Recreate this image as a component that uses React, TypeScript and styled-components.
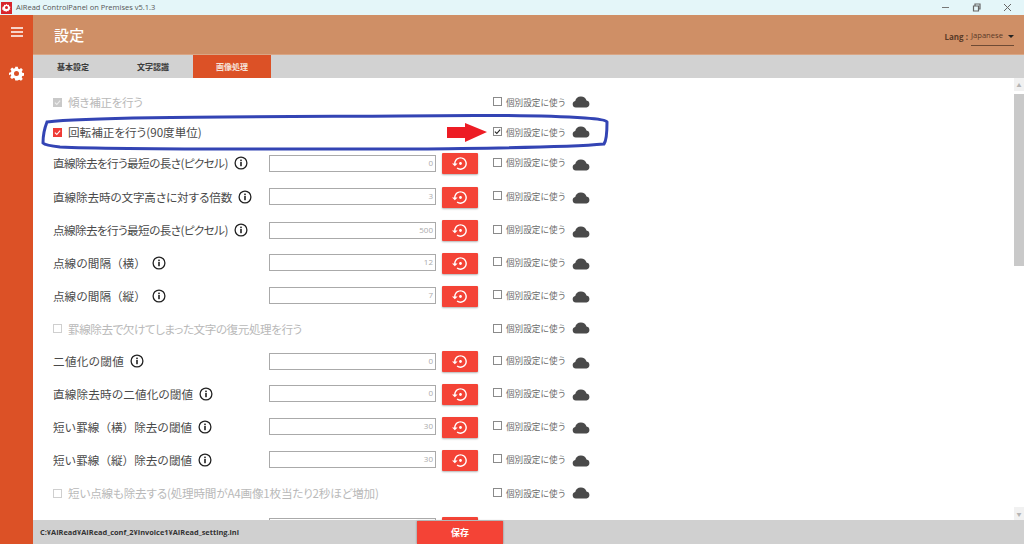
import React from "react";
import styled, { createGlobalStyle, css } from "styled-components";

const Global = createGlobalStyle`
  html, body { margin: 0; padding: 0; width: 1024px; height: 544px; overflow: hidden; background: #fff; }
  body { font-family: "Noto Sans CJK JP", "Noto Sans", sans-serif; }
`;

const labelText = css<{ $track?: number; $plain?: boolean }>`
  font-size:11.6px;
  font-feature-settings:${p => (p.$plain ? "normal" : '"palt"')};
  letter-spacing:${p => p.$track ?? 0}px;
  white-space:nowrap;
`;

const Win = styled.div`width:1024px;height:544px;display:flex;flex-direction:column;position:relative;overflow:hidden;`;
const TitleBar = styled.div`height:15px;flex:none;background:#e4f6f9;display:flex;align-items:center;padding:0 12px 0 1px;gap:4px;color:#555;font:7.5px/15px "Open Sans","Noto Sans",sans-serif;`;
const AppLogo = styled.div`width:11px;height:12px;background:#d8252b;display:flex;align-items:center;justify-content:center;`;
const TitleText = styled.span`flex:1;`;
const WinButtons = styled.div`display:flex;align-items:center;gap:22px;`;
const Body = styled.div`flex:1;display:flex;min-height:0;`;
const Sidebar = styled.div`width:33px;flex:none;background:#dc5126;display:flex;flex-direction:column;align-items:center;color:#fff;padding-top:11px;gap:28px;`;
const Main = styled.div`flex:1;display:flex;flex-direction:column;min-width:0;`;
const Header = styled.div`height:40px;flex:none;background:#cf8f66;display:flex;align-items:center;justify-content:space-between;padding:0 10px 0 21px;border-bottom:1px solid #d9a685;box-sizing:border-box;`;
const Title = styled.div`color:#fff;font-size:15px;font-weight:500;line-height:40px;letter-spacing:.3px;`;
const Lang = styled.div`display:flex;align-items:flex-start;gap:3px;color:#5b3a26;font:700 8px/12px "Open Sans",sans-serif;padding-top:5px;`;
const LangLabel = styled.span`margin-top:3px;`;
const LangSelect = styled.div`width:43px;height:17px;border-bottom:1px solid #6e4a34;display:flex;justify-content:space-between;font-weight:400;font-size:7.6px;line-height:12px;box-sizing:border-box;margin-top:1px;`;
const Caret = styled.i`width:0;height:0;border:3px solid transparent;border-top:3px solid #222;border-bottom:0;margin:6px 0 0;`;
const Tabs = styled.div`height:23px;flex:none;background:#d2d2d2;display:flex;`;
const Tab = styled.div<{ $active?: boolean; $w: number }>`
  width:${p => p.$w}px;text-align:center;font-size:8px;line-height:23px;font-weight:700;
  background:${p => (p.$active ? "#dc5126" : "transparent")};
  color:${p => (p.$active ? "#f6e3da" : "#3a3a3a")};
`;
const Content = styled.div`flex:1;min-height:0;display:flex;position:relative;overflow:hidden;`;
const List = styled.div`flex:1;padding:9px 0 0 20px;min-width:0;`;
const Row = styled.div<{ $h: number }>`height:${p => p.$h}px;display:flex;align-items:center;`;
const Left = styled.div`width:216px;flex:none;display:flex;align-items:center;color:#4a4a4a;gap:6px;`;
const LabelText = styled.span<{ $track?: number; $plain?: boolean }>`${labelText}`;
const CheckLeft = styled.div<{ $off?: boolean }>`width:440px;flex:none;display:flex;align-items:center;gap:6px;color:${p => (p.$off ? "#b9b9b9" : "#4a4a4a")};`;
const SmallBox = styled.span<{ $kind: "grey" | "red" | "empty" }>`
  width:9px;height:9px;box-sizing:border-box;display:flex;align-items:center;justify-content:center;flex:none;
  background:${p => (p.$kind === "grey" ? "#c9c9c9" : p.$kind === "red" ? "#ef3b36" : "#fff")};
  border:${p => (p.$kind === "empty" ? "1px solid #cfcfcf" : "none")};
`;
const Input = styled.div`width:167px;height:17px;box-sizing:border-box;border:1px solid #aaa;flex:none;text-align:right;font:8px/13px "Open Sans",sans-serif;color:#aaa;padding-right:2px;background:#fff;`;
const ResetBtn = styled.div`width:36px;height:21px;margin:1px 15px 0 6px;flex:none;background:#f44336;border-radius:1px;box-shadow:0 1px 2px rgba(0,0,0,.3);display:flex;align-items:center;justify-content:center;`;
const Own = styled.div`display:flex;align-items:center;font-size:8.6px;color:#6a6a6a;white-space:nowrap;width:130px;`;
const OwnLabel = styled.span<{ $raised: boolean }>`display:flex;align-items:center;margin-bottom:${p => (p.$raised ? 2 : 1)}px;`;
const OwnBox = styled.span`width:9px;height:9px;box-sizing:border-box;border:1px solid #8a8a8a;background:#fff;margin-right:4px;flex:none;display:flex;align-items:center;justify-content:center;`;
const Cloud = styled.svg<{ $raised: boolean }>`width:18px;height:13px;margin-left:6px;margin-top:${p => (p.$raised ? 2 : 0)}px;margin-bottom:${p => (p.$raised ? 0 : 2)}px;flex:none;`;
const Scrollbar = styled.div`width:10px;flex:none;background:#fff;display:flex;flex-direction:column;justify-content:space-between;`;
const ScrollThumb = styled.div`position:absolute;right:0;top:16px;width:10px;height:172px;background:#c9c9c9;`;
const ArrowCell = styled.span`height:13px;background:#f1f1f1;color:#b5b5b5;font-size:5px;line-height:13px;text-align:center;`;
const Footer = styled.div`height:24px;flex:none;background:#d0d0d0;position:relative;display:flex;align-items:center;padding-left:7px;font:700 7.4px/24px "Open Sans",sans-serif;color:#333;`;
const SaveBtn = styled.div`position:absolute;left:384px;bottom:0;width:86px;height:23px;background:#f44336;color:#fff;font:700 9px/23px "Noto Sans CJK JP",sans-serif;text-align:center;box-shadow:0 0 2px rgba(0,0,0,.4);`;
const Overlay = styled.svg`position:absolute;left:0;top:0;width:1024px;height:544px;pointer-events:none;`;

const Info = () => (
  <svg width="14" height="14" viewBox="0 0 14 14" style={{ flex: "none" }}>
    <circle cx="7" cy="7" r="5.9" fill="none" stroke="#222" strokeWidth="1.3" />
    <rect x="6.2" y="6" width="1.6" height="4.2" fill="#222" />
    <rect x="6.2" y="3.6" width="1.6" height="1.6" fill="#222" />
  </svg>
);
const Tick = ({ c }: { c: string }) => (
  <svg width="7" height="7" viewBox="0 0 8 8"><path d="M1 4.2 3.2 6.3 7 1.8" fill="none" stroke={c} strokeWidth="1.3" /></svg>
);
const ResetIcon = () => (
  <svg width="17" height="17" viewBox="0 0 24 24">
    <path fill="#fff" d="M14 12c0-1.100-.9-2-2-2s-2 .9-2 2 .9 2 2 2 2-.9 2-2zm-2-9c-4.970 0-9 4.030-9 9H0l4 4 4-4H5c0-3.870 3.130-7 7-7s7 3.130 7 7-3.130 7-7 7c-1.510 0-2.910-.49-4.060-1.300l-1.420 1.440C8.040 20.300 9.940 21 12 21c4.970 0 9-4.030 9-9s-4.030-9-9-9z" />
  </svg>
);
const OwnSetting = ({ checked, raised }: { checked?: boolean; raised: boolean }) => (
  <Own>
    <OwnLabel $raised={raised}>
      <OwnBox>{checked && <Tick c="#222" />}</OwnBox>
      個別設定に使う
    </OwnLabel>
    <Cloud $raised={raised} viewBox="0 0 18 13">
      <path d="M3.800 12.500a3.300 3.300 0 0 1-.6-6.500 5.900 5.900 0 0 1 11.300-.4 3.500 3.500 0 0 1 0 6.900z" fill="#4a4a4a" />
    </Cloud>
  </Own>
);

type Base = { h: number; label: string; track?: number; plain?: boolean };
type R =
  | (Base & { t: "check"; kind: "grey" | "red" | "empty"; off?: boolean; own?: boolean })
  | (Base & { t: "input"; value: string });

const rows: R[] = [
  { t: "check", h: 30, label: "傾き補正を行う", kind: "grey", off: true, track: -0.3 },
  { t: "check", h: 30, label: "回転補正を行う(90度単位)", kind: "red", own: true },
  { t: "input", h: 32, label: "直線除去を行う最短の長さ(ピクセル)", value: "0", track: -0.6 },
  { t: "input", h: 35, label: "直線除去時の文字高さに対する倍数", value: "3", track: -0.12 },
  { t: "input", h: 32, label: "点線除去を行う最短の長さ(ピクセル)", value: "500", track: -0.6 },
  { t: "input", h: 33, label: "点線の間隔（横）", value: "12", plain: true },
  { t: "input", h: 33, label: "点線の間隔（縦）", value: "7", plain: true },
  { t: "check", h: 33, label: "罫線除去で欠けてしまった文字の復元処理を行う", kind: "empty", off: true, track: -0.45 },
  { t: "input", h: 32, label: "二値化の閾値", value: "0", track: 0.33 },
  { t: "input", h: 33, label: "直線除去時の二値化の閾値", value: "0", track: 0.17 },
  { t: "input", h: 33, label: "短い罫線（横）除去の閾値", value: "30", plain: true },
  { t: "input", h: 33, label: "短い罫線（縦）除去の閾値", value: "30", plain: true },
  { t: "check", h: 34, label: "短い点線も除去する(処理時間がA4画像1枚当たり2秒ほど増加)", kind: "empty", off: true, track: -0.2 },
  { t: "input", h: 33, label: "短い点線除去時の間隔(横)", value: "" },
];

export default function App() {
  return (
    <Win>
      <Global />
      <TitleBar>
        <AppLogo>
          <svg width="9" height="9" viewBox="0 0 24 24"><path d="M12 2l2.500 3.500 4-1 .5 4 4 2-2.500 3 2 3.500-4 1-1 4-4-1-2.500 3-2.500-3-4 1-1-4-4-1 2-3.500L1 10.500l4-2 .5-4 4 1z" fill="#fff" /><circle cx="12" cy="12" r="4" fill="#d8252b" /></svg>
        </AppLogo>
        <TitleText>AIRead ControlPanel on Premises v5.1.3</TitleText>
        <WinButtons>
          <svg width="9" height="9" viewBox="0 0 9 9"><path d="M1 4.500h7" stroke="#777" /></svg>
          <svg width="9" height="9" viewBox="0 0 9 9"><path d="M1.500 3h5v5h-5zM3 3V1h5v5H6.500" fill="none" stroke="#666" strokeWidth="1.200" /></svg>
          <svg width="9" height="9" viewBox="0 0 9 9"><path d="M1 1l7 7M8 1L1 8" stroke="#666" /></svg>
        </WinButtons>
      </TitleBar>
      <Body>
        <Sidebar>
          <svg width="14" height="12" viewBox="0 0 14 12"><path d="M1 2h12M1 6h12M1 10h12" stroke="#fff" strokeWidth="1.400" /></svg>
          <svg width="15" height="15" viewBox="0 0 24 24" fill="#fff">
            <path fillRule="evenodd" d="M10 1h4l.6 3.100 2 .9 2.700-1.700 2.800 2.800-1.700 2.700.8 2 3 .6v4l-3 .6-.9 2 1.700 2.700-2.800 2.800-2.700-1.700-2 .8L14 23h-4l-.6-3.100-2-.8-2.700 1.700-2.800-2.800 1.700-2.700-.8-2L0 14.600v-4l3-.6.900-2-1.700-2.700L5 2.500l2.700 1.700 2-.9zM12 8a4 4 0 1 0 0 8 4 4 0 0 0 0-8z" />
          </svg>
        </Sidebar>
        <Main>
          <Header>
            <Title>設定</Title>
            <Lang>
              <LangLabel>Lang :</LangLabel>
              <LangSelect>Japanese<Caret /></LangSelect>
            </Lang>
          </Header>
          <Tabs>
            <Tab $w={80}>基本設定</Tab>
            <Tab $w={80}>文字認識</Tab>
            <Tab $w={78} $active>画像処理</Tab>
          </Tabs>
          <Content>
            <List>
              {rows.map(r => (
                <Row key={r.label} $h={r.h}>
                  {r.t === "check" ? (
                    <CheckLeft $off={r.off}>
                      <SmallBox $kind={r.kind}>{r.kind !== "empty" && <Tick c={r.kind === "red" ? "#fff" : "#eee"} />}</SmallBox>
                      <LabelText $track={r.track} $plain={r.plain}>{r.label}</LabelText>
                    </CheckLeft>
                  ) : (
                    <>
                      <Left>
                        <LabelText $track={r.track} $plain={r.plain}>{r.label}</LabelText>
                        <Info />
                      </Left>
                      <Input>{r.value}</Input>
                      <ResetBtn><ResetIcon /></ResetBtn>
                    </>
                  )}
                  <OwnSetting checked={r.t === "check" && r.own} raised={r.t === "input"} />
                </Row>
              ))}
            </List>
            <Scrollbar>
              <ArrowCell>▲</ArrowCell>
              <ArrowCell>▼</ArrowCell>
            </Scrollbar>
            <ScrollThumb />
          </Content>
          <Footer>
            C:¥AIRead¥AIRead_conf_2¥Invoice1¥AIRead_setting.ini
            <SaveBtn>保存</SaveBtn>
          </Footer>
        </Main>
      </Body>
      <Overlay viewBox="0 0 1024 544">
        <path d="M47 122 C90 117 230 117 400 116 C470 115 540 115 585 118 C600 119 606 120 607 122 C607 130 607 140 604 144 C560 148 480 148 420 149 C300 149 120 150 60 147 C50 146 45 145 43 143 C43 134 45 127 47 122 Z" fill="none" stroke="#3344b4" strokeWidth="3" />
        <path d="M447 127h18v-4l22 9-22 10v-4h-18z" fill="#ed1c24" />
      </Overlay>
    </Win>
  );
}
